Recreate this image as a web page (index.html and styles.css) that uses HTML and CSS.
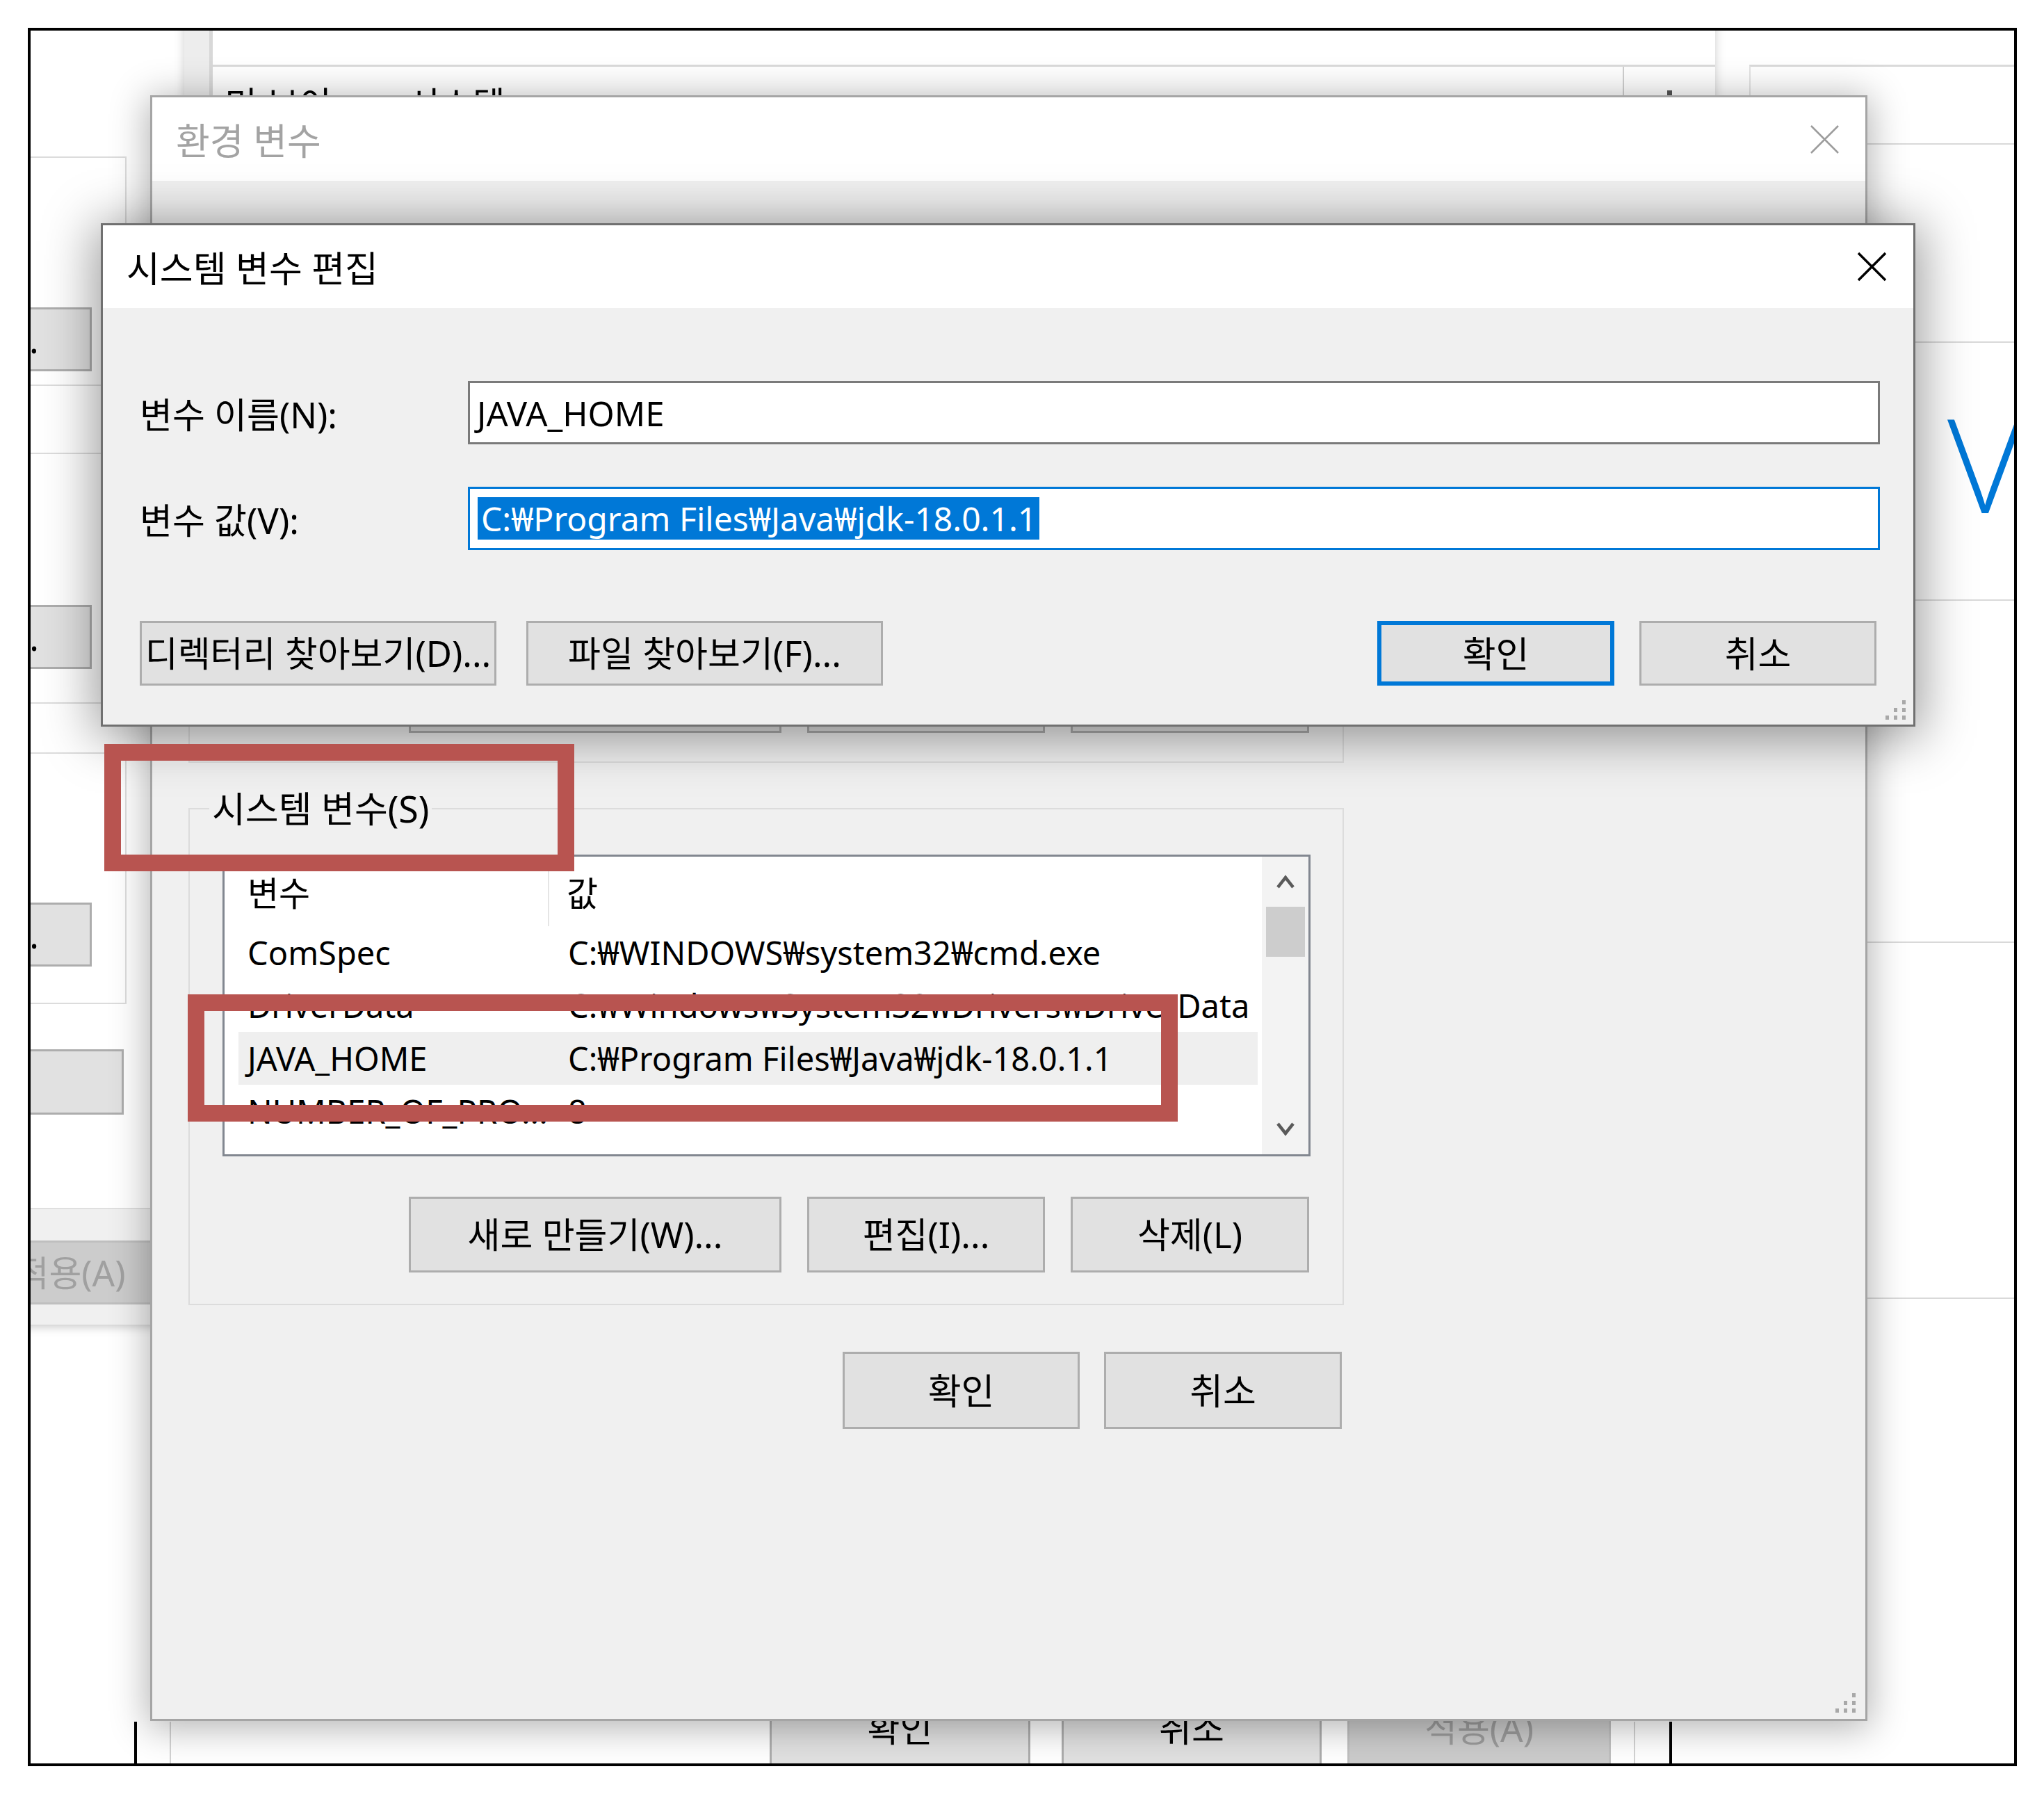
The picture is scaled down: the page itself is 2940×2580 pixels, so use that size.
FILE: index.html
```html
<!DOCTYPE html>
<html lang="ko">
<head>
<meta charset="utf-8">
<title>시스템 변수 편집</title>
<link rel="stylesheet" href="styles.css">
</head>
<body>
<div class="frame">

  <div class="lwin">
    <div class="lw-group lw-g1"><div class="btn lw-btn">설정(S)...</div></div>
    <div class="lw-group lw-g2"><div class="btn lw-btn">설정(E)...</div></div>
    <div class="lw-group lw-g3"><div class="btn lw-btn">설정(T)...</div></div>
    <div class="btn lw-envbtn"></div>
    <div class="lw-foot"><div class="btn lw-apply">적용(A)</div></div>
  </div>

  <div class="mwin">
    <div class="mw-band"></div>
    <div class="mw-main">
      <div class="mw-top"></div>
      <div class="mw-tabs">
        <span class="mw-tab">미 보이</span>
        <span class="mw-tab mw-tab2">시스템</span>
        <div class="mw-cap"><span class="mw-dot"></span></div>
      </div>
    </div>
  </div>

  <div class="rwin">
    <div class="rw-sec rw-s1"></div>
    <div class="rw-sec rw-s2"></div>
    <div class="rw-sec rw-s3"><div class="rw-logo">V</div></div>
    <div class="rw-sec rw-s4"></div>
    <div class="rw-sec rw-s5"></div>
  </div>

  <div class="bwin">
    <div class="bw-inner">
      <div class="btn bw-btn bw-ok">확인</div>
      <div class="btn bw-btn bw-cancel">취소</div>
      <div class="btn bw-btn bw-apply">적용(A)</div>
    </div>
  </div>

  <div class="env">
    <div class="env-title">
      <span>환경 변수</span>
      <svg class="xicon" width="43" height="43" viewBox="0 0 43 43"><path d="M2 2L41 41M41 2L2 41" stroke="#9c9c9c" stroke-width="2.5" fill="none"/></svg>
    </div>
    <div class="env-body">
      <div class="ugroup">
        <div class="btn ug-new">새로 만들기(N)...</div>
        <div class="btn ug-edit">편집(E)...</div>
        <div class="btn ug-del">삭제(D)</div>
      </div>
      <div class="sgroup">
        <div class="legend">시스템 변수(S)</div>
        <div class="list">
          <div class="lv">
            <div class="lv-head">
              <div class="lv-hc lv-hc1">변수</div>
              <div class="lv-hc lv-hc2">값</div>
            </div>
            <div class="lv-row"><span>ComSpec</span><span>C:₩WINDOWS₩system32₩cmd.exe</span></div>
            <div class="lv-row"><span>DriverData</span><span>C:₩Windows₩System32₩Drivers₩DriverData</span></div>
            <div class="lv-row lv-sel"><span>JAVA_HOME</span><span>C:₩Program Files₩Java₩jdk-18.0.1.1</span></div>
            <div class="lv-row"><span>NUMBER_OF_PRO...</span><span>8</span></div>
          </div>
          <div class="lv-scroll">
            <div class="sb-arrow"><svg width="28" height="22" viewBox="0 0 28 22"><path d="M3 19L14 5L25 19" stroke="#5a5a5a" stroke-width="4.5" fill="none"/></svg></div>
            <div class="sb-thumb"></div>
            <div class="sb-arrow sb-down"><svg width="28" height="22" viewBox="0 0 28 22"><path d="M3 3L14 17L25 3" stroke="#5a5a5a" stroke-width="4.5" fill="none"/></svg></div>
          </div>
        </div>
        <div class="sg-btns">
          <div class="btn sg-new">새로 만들기(W)...</div>
          <div class="btn sg-edit">편집(I)...</div>
          <div class="btn sg-del">삭제(L)</div>
        </div>
      </div>
      <div class="env-foot">
        <div class="btn ef-ok">확인</div>
        <div class="btn ef-cancel">취소</div>
      </div>
      <svg class="grip grip-env" width="37" height="31" viewBox="0 0 37 31"><g fill="#a8a8a8"><rect x="28" y="2" width="5" height="6"/><rect x="16" y="13" width="5" height="6"/><rect x="28" y="13" width="5" height="6"/><rect x="4" y="24" width="5" height="6"/><rect x="16" y="24" width="5" height="6"/><rect x="28" y="24" width="5" height="6"/></g></svg>
    </div>
  </div>

  <div class="edit">
    <div class="edit-title">
      <span>시스템 변수 편집</span>
      <svg class="xicon" width="43" height="43" viewBox="0 0 43 43"><path d="M2 2L41 41M41 2L2 41" stroke="#000" stroke-width="3.5" fill="none"/></svg>
    </div>
    <div class="edit-body">
      <div class="fields">
        <div class="flabel">변수 이름(N):</div>
        <div class="input">JAVA_HOME</div>
        <div class="flabel">변수 값(V):</div>
        <div class="input input-focus"><span class="sel">C:₩Program Files₩Java₩jdk-18.0.1.1</span></div>
      </div>
      <div class="edit-btns">
        <div class="btn eb-dir">디렉터리 찾아보기(D)...</div>
        <div class="btn eb-file">파일 찾아보기(F)...</div>
        <div class="btn eb-ok">확인</div>
        <div class="btn eb-cancel">취소</div>
      </div>
      <svg class="grip grip-edit" width="37" height="31" viewBox="0 0 37 31"><g fill="#a8a8a8"><rect x="28" y="2" width="5" height="6"/><rect x="16" y="13" width="5" height="6"/><rect x="28" y="13" width="5" height="6"/><rect x="4" y="24" width="5" height="6"/><rect x="16" y="24" width="5" height="6"/><rect x="28" y="24" width="5" height="6"/></g></svg>
    </div>
  </div>

  <div class="mark mark1"></div>
  <div class="mark mark2"></div>
</div>
</body>
</html>
```

FILE: styles.css
```css
* { box-sizing: border-box; }
html, body { margin: 0; padding: 0; background: #fff; }
body {
  font-family: "Noto Sans", "Noto Sans CJK KR", sans-serif;
  font-size: 51px;
  color: #000;
}

.frame {
  position: relative;
  margin: 40px 0 0 40px;
  width: 2861px;
  height: 2500px;
  border: 4px solid #000;
  overflow: hidden;
  background: #fff;
}

.btn {
  display: flex;
  align-items: center;
  justify-content: center;
  background: #e1e1e1;
  border: 3px solid #adadad;
  white-space: nowrap;
  line-height: 1;
  flex-shrink: 0;
}

/* ---------- left background window ---------- */
.lwin {
  position: absolute;
  left: -260px;
  top: -68px;
  width: 522px;
  height: 1929px;
  background: #fff;
  display: flex;
  flex-direction: column;
  box-shadow: 0 2px 14px rgba(0,0,0,.25);
}
.lw-group {
  margin-right: 124px;
  border: 2px solid #dcdcdc;
  display: flex;
  justify-content: flex-end;
  align-items: flex-end;
  padding-right: 48px;
}
.lw-g1 { margin-top: 249px; height: 330px; padding-bottom: 19px; }
.lw-g2 { margin-top: 96px; height: 361px; padding-bottom: 48px; }
.lw-g3 { margin-top: 70px; height: 362px; padding-bottom: 52px; }
.lw-btn { width: 346px; height: 92px; }
.lw-envbtn { align-self: flex-end; margin-right: 128px; margin-top: 65px; width: 360px; height: 94px; }
.lw-foot {
  margin-top: auto;
  height: 168px;
  border-top: 2px solid #dfdfdf;
  background: #f0f0f0;
  display: flex;
  justify-content: flex-end;
  padding: 45px 14px 0 0;
}
.lw-apply { width: 380px; height: 92px; background: #cccccc; border-color: #bfbfbf; color: #a0a0a0; }

/* ---------- middle background window ---------- */
.mwin {
  position: absolute;
  left: 221px;
  top: -50px;
  width: 2202px;
  height: 2400px;
  background: #fff;
  display: flex;
  box-shadow: 0 0 14px rgba(0,0,0,.2);
}
.mw-band { width: 41px; background: #ededed; border-right: 5px solid #d8d8d8; }
.mw-main { flex: 1; display: flex; flex-direction: column; }
.mw-top { height: 102px; border-bottom: 3px solid #dadada; }
.mw-tabs { display: flex; height: 200px; padding-left: 17px; }
.mw-tab { padding-top: 23px; line-height: 60px; white-space: nowrap; }
.mw-tab2 { margin-left: 109px; }
.mw-cap {
  margin-left: auto;
  width: 133px;
  border-left: 2px solid #d0d0d0;
  display: flex;
  justify-content: center;
  padding-top: 34px;
}
.mw-dot { width: 7px; height: 10px; background: #555; }

/* ---------- right background window ---------- */
.rwin {
  position: absolute;
  left: 2472px;
  top: 49px;
  width: 460px;
  height: 2370px;
  background: #fff;
  border-left: 2px solid #e3e3e3;
  border-top: 3px solid #dadada;
  display: flex;
  flex-direction: column;
}
.rw-sec { border-bottom: 2px solid #d9d9d9; flex-shrink: 0; overflow: visible; }
.rw-s1 { height: 112px; }
.rw-s2 { height: 285px; }
.rw-s3 { height: 371px; }
.rw-s4 { height: 492px; }
.rw-s5 { height: 512px; }
.rw-logo {
  margin: 78px 0 0 283px;
  font-family: "Open Sans", "Noto Sans", sans-serif;
  font-weight: 300;
  font-size: 188px;
  line-height: 1;
  color: #0078d7;
  white-space: nowrap;
}

/* ---------- bottom background window ---------- */
.bwin {
  position: absolute;
  left: 149px;
  top: 2432px;
  width: 2212px;
  height: 200px;
  background: #fff;
  border-left: 4px solid #000;
  border-right: 4px solid #000;
  display: flex;
}
.bw-inner {
  flex: 1;
  margin: 0 49px 0 47px;
  border-left: 2px solid #d3d3d3;
  border-right: 2px solid #d3d3d3;
  display: flex;
  justify-content: flex-end;
  align-items: flex-start;
  padding-right: 33px;
}
.bw-btn { margin-top: -56px; height: 170px; align-items: flex-start; padding-top: 32px; line-height: 60px; }
.bw-ok { width: 375px; }
.bw-cancel { width: 374px; margin-left: 45px; }
.bw-apply { width: 379px; margin-left: 37px; background: #cccccc; border-color: #c0c0c0; color: #9c9c9c; }

/* ---------- 환경 변수 dialog ---------- */
.env {
  position: absolute;
  left: 172px;
  top: 93px;
  width: 2470px;
  height: 2338px;
  border: 3px solid #a5a5a5;
  background: #f0f0f0;
  display: flex;
  flex-direction: column;
  box-shadow: 0 6px 50px 4px rgba(0,0,0,.3);
}
.env-title {
  height: 120px;
  background: #fff;
  display: flex;
  align-items: center;
  justify-content: space-between;
  padding: 0 37px 0 34px;
  color: #a3a3a3;
  font-size: 53px;
  flex-shrink: 0;
}
.env-body { flex: 1; display: flex; flex-direction: column; padding-left: 52px; }
.ugroup {
  margin-top: 90px;
  width: 1662px;
  height: 747px;
  flex-shrink: 0;
  border: 2px solid #dcdcdc;
  display: flex;
  justify-content: flex-end;
  align-items: flex-end;
  gap: 37px;
  padding: 0 48px 41px 0;
}
.ug-new, .sg-new { width: 536px; height: 109px; }
.ug-edit, .sg-edit { width: 342px; height: 109px; }
.ug-del, .sg-del { width: 343px; height: 109px; }

.sgroup {
  margin-top: 65px;
  width: 1662px;
  border: 2px solid #dcdcdc;
  padding: 0 46px 45px 47px;
  display: flex;
  flex-direction: column;
  flex-shrink: 0;
}
.legend {
  align-self: flex-start;
  margin: -31px 0 0 -19px;
  padding: 0 4px;
  background: #f0f0f0;
  line-height: 60px;
  font-size: 52px;
  white-space: nowrap;
}
.list {
  margin-top: 36px;
  height: 434px;
  border: 3px solid #828790;
  background: #fff;
  display: flex;
  overflow: hidden;
  font-size: 47px;
}
.lv { flex: 1; display: flex; flex-direction: column; min-width: 0; }
.lv-head { display: grid; grid-template-columns: 467px 1fr; padding-top: 21px; height: 100px; flex-shrink: 0; font-size: 49px; }
.lv-hc { height: 79px; line-height: 62px; }
.lv-hc1 { padding-left: 33px; border-right: 2px solid #e5e5e5; }
.lv-hc2 { padding-left: 25px; }
.lv-row {
  display: grid;
  grid-template-columns: 461px 1fr;
  height: 76px;
  line-height: 76px;
  margin: 0 6px 0 20px;
  padding-left: 13px;
  white-space: nowrap;
  flex-shrink: 0;
}
.lv-sel { background: #efefef; }
.lv-scroll {
  width: 67px;
  flex-shrink: 0;
  background: #f3f3f3;
  display: flex;
  flex-direction: column;
  align-items: center;
}
.sb-arrow { height: 72px; display: flex; align-items: center; justify-content: center; }
.sb-down { margin-top: auto; }
.sb-thumb { width: 56px; height: 72px; background: #cdcdcd; }

.sg-btns { margin-top: 58px; display: flex; justify-content: flex-end; gap: 37px; padding-right: 2px; }

.env-foot { margin-top: 67px; width: 1662px; display: flex; justify-content: flex-end; gap: 35px; padding-right: 3px; font-size: 52px; }
.ef-ok { width: 341px; height: 111px; }
.ef-cancel { width: 342px; height: 111px; }

.grip { display: block; flex-shrink: 0; }
.grip-env { margin-top: auto; align-self: flex-end; margin-right: 10px; margin-bottom: 8px; }

/* ---------- 시스템 변수 편집 dialog ---------- */
.edit {
  position: absolute;
  left: 101px;
  top: 277px;
  width: 2610px;
  height: 724px;
  border: 3px solid #707070;
  background: #f0f0f0;
  display: flex;
  flex-direction: column;
  box-shadow: 0 8px 70px 8px rgba(0,0,0,.4);
}
.edit-title {
  height: 119px;
  background: #fff;
  display: flex;
  align-items: center;
  justify-content: space-between;
  padding: 0 38px 0 34px;
  flex-shrink: 0;
  font-size: 52px;
}
.xicon { display: block; }
.edit-body { flex: 1; display: flex; flex-direction: column; padding: 105px 48px 0 53px; }
.fields { display: grid; grid-template-columns: 472px 1fr; row-gap: 61px; align-items: center; }
.flabel { white-space: nowrap; }
.input {
  height: 91px;
  border: 3px solid #7a7a7a;
  background: #fff;
  padding-left: 10px;
  display: flex;
  align-items: center;
  white-space: nowrap;
  font-size: 49px;
}
.input-focus { border-color: #0078d7; padding-left: 11px; font-size: 48px; }
.sel { background: #0078d7; color: #fff; height: 61px; line-height: 61px; padding: 0 4px 0 5px; }
.edit-btns { margin-top: 102px; display: flex; height: 93px; margin-right: 5px; }
.eb-dir { width: 513px; }
.eb-file { width: 513px; margin-left: 43px; }
.eb-ok { width: 341px; margin-left: auto; border: 6px solid #0078d7; font-size: 52px; }
.eb-cancel { width: 341px; margin-left: 36px; font-size: 52px; }
.grip-edit { margin-top: auto; align-self: flex-end; margin-right: -41px; margin-bottom: 6px; }

/* ---------- annotation boxes ---------- */
.mark { position: absolute; border: 24px solid #b85450; }
.mark1 { left: 106px; top: 1026px; width: 676px; height: 183px; }
.mark2 { left: 226px; top: 1386px; width: 1424px; height: 183px; }
```
